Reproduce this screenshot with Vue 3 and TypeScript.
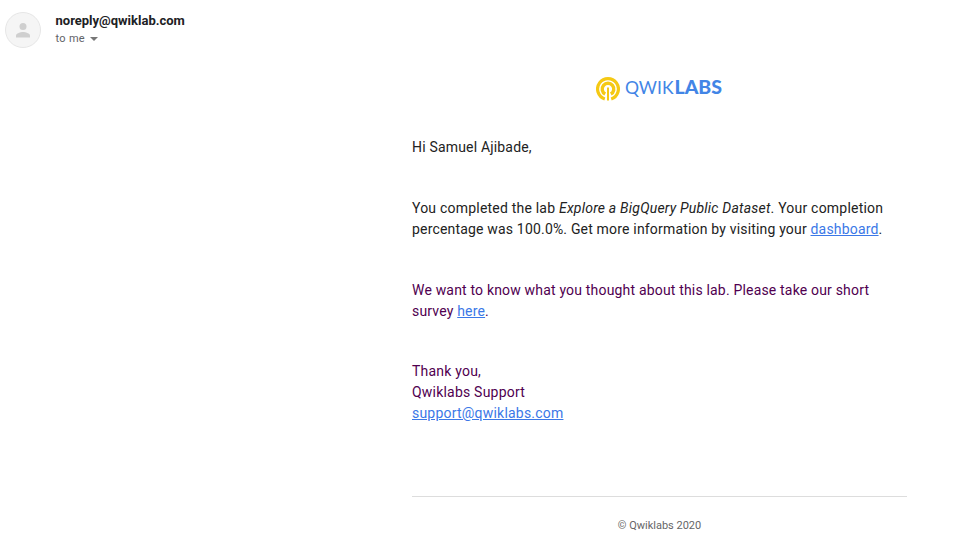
<script setup lang="ts">
const sender: string = 'noreply@qwiklab.com'
const recipient: string = 'Samuel Ajibade'
const lab: string = 'Explore a BigQuery Public Dataset'
</script>

<template>
  <main class="mail">
    <header class="sender">
      <svg class="avatar" viewBox="0 0 36 36">
        <circle cx="18" cy="18" r="17.5" fill="#f5f5f5" stroke="#e6e6e6" />
        <circle cx="18" cy="14.5" r="3.5" fill="#cfcfcf" />
        <path d="M11 25.5v-1.8c0-2.4 4.6-3.6 7-3.6s7 1.2 7 3.6v1.8z" fill="#cfcfcf" />
      </svg>
      <div class="who">
        <div class="from">{{ sender }}</div>
        <div class="to">to me <span class="caret"></span></div>
      </div>
    </header>
    <article class="body">
      <div class="logo">
        <svg class="mark" viewBox="0 0 24 24" fill="none" stroke="#f5c914">
          <path d="M8.8 21.9A10.4 10.4 0 1 1 15.2 21.9" stroke-width="3.2" />
          <path d="M9.2 17.1A5.8 5.8 0 1 1 14.8 17.1" stroke-width="3.4" />
          <path d="M12 10.5v13" stroke-width="2" />
        </svg>
        <svg class="word" viewBox="0 0 98 24">
          <text x="0" y="18" textLength="48.5" lengthAdjust="spacingAndGlyphs">QWIK</text>
          <text class="bold" x="49.5" y="18" textLength="47.5" lengthAdjust="spacingAndGlyphs">LABS</text>
        </svg>
      </div>
      <p>Hi {{ recipient }},</p>
      <p><span class="wide">You completed the lab <em>{{ lab }}</em>. Your completion</span><br />percentage was 100.0%. Get more information by visiting your <a href="#">dashboard</a>.</p>
      <p class="visited survey">We want to know what you thought about this lab. Please take our short<br />survey <a href="#">here</a>.</p>
      <p class="visited last">Thank you,<br />Qwiklabs Support<br /><a href="#">support@qwiklabs.com</a></p>
      <footer>© Qwiklabs 2020</footer>
    </article>
  </main>
</template>

<style>
body { background: #fff; }
</style>
<style scoped>
.mail { box-sizing: border-box; width: 980px; height: 552px; padding: 12px 0 0 5px; overflow: hidden; background: #fff; color: #222; font-family: Roboto, sans-serif; }
.sender { display: flex; gap: 14.5px; height: 36px; }
.avatar { width: 36px; height: 36px; }
.from { font-size: 13px; line-height: 17px; font-weight: 700; color: #202124; }
.to { display: flex; align-items: center; gap: 5px; font-size: 11px; line-height: 18px; padding-top: 1px; letter-spacing: 0.3px; color: #5f6368; }
.caret { border: 4px solid transparent; border-top-color: #777; border-bottom: 0; }
.body { width: 495px; margin: 28px 0 0 407px; }
.logo { display: flex; justify-content: center; align-items: center; gap: 5px; height: 24px; margin-bottom: 37px; }
.mark { width: 24px; height: 24px; margin-top: 1px; }
.word { width: 98px; height: 24px; font: 18px Lato, sans-serif; fill: #4285e6; }
.bold { font-weight: 900; }
p { margin: 0 0 40px; font-size: 14px; line-height: 21px; letter-spacing: 0.18px; white-space: nowrap; }
.wide { letter-spacing: 0.21px; }
.visited { color: #500050; }
a { color: #3b78e7; }
.survey { margin-bottom: 39px; }
.last { margin-bottom: 72px; }
.last { letter-spacing: 0.21px; }
footer { border-top: 1px solid #ddd; padding-top: 21px; text-align: center; font-size: 11px; line-height: 16px; color: #666; }
</style>
